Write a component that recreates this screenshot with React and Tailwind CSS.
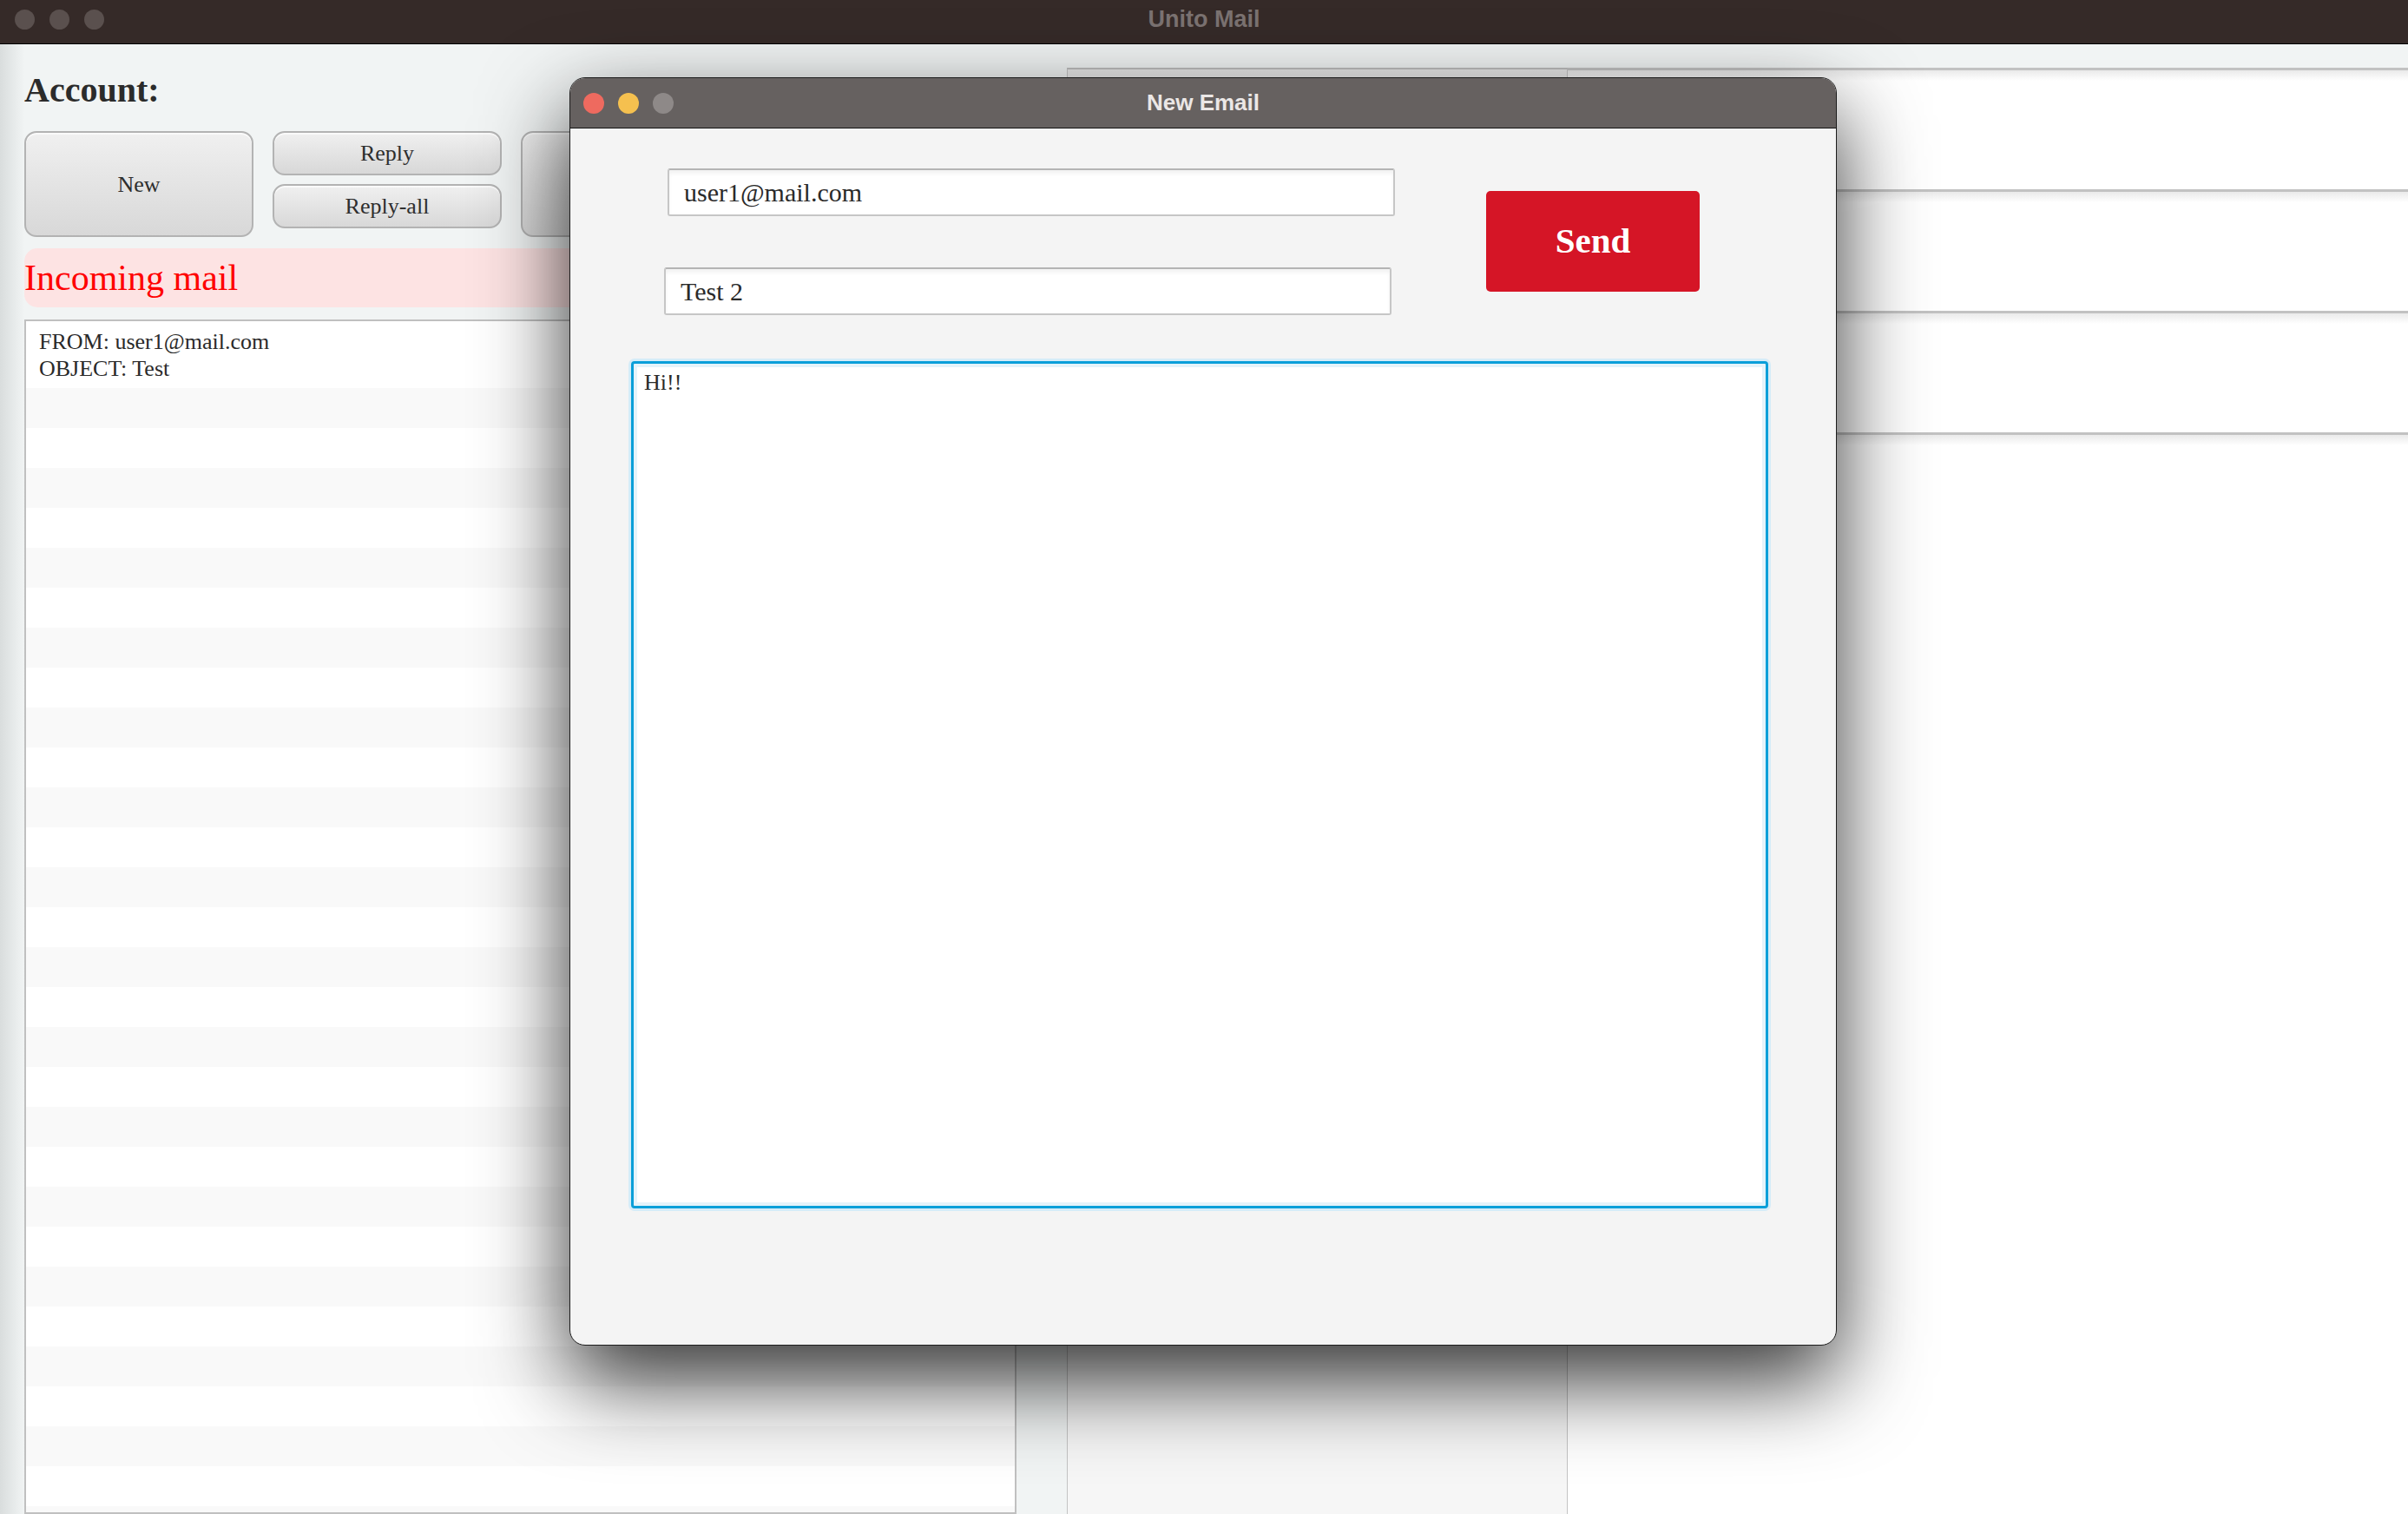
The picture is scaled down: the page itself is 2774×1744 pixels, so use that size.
import React from 'react';

const serif = "font-['Liberation_Serif',serif]";

const GrayButton = ({ label, className }) => (
  <button
    className={`flex items-center justify-center rounded-[14px] border-2 border-[#b3b3b3] bg-gradient-to-b from-[#f0f0f0] to-[#d8d8d8] text-[26px] text-[#2e2e2e] shadow-[inset_0_2px_0_#fafafa] ${serif} ${className}`}
  >
    {label}
  </button>
);

const MailList = () => {
  const rows = Array.from({ length: 30 }, (_, i) => i);
  return (
    <div className="flex-1 overflow-hidden border-2 border-[#c0c0c0] bg-white">
      <div className="pl-[15px] pt-[8px] pb-[7px] text-[26px] leading-[31px] text-[#2a2a2a]">
        <div>FROM: user1@mail.com</div>
        <div>OBJECT: Test</div>
      </div>
      {rows.map((i) => (
        <div
          key={i}
          className={i % 2 === 0 ? 'h-[46px] bg-[#f9f9f9]' : 'h-[46px] bg-white'}
        />
      ))}
    </div>
  );
};

const FieldRow = ({ last }) => (
  <div
    className={`border-t-[3px] border-[#c2c2c2] bg-[linear-gradient(to_bottom,#eaeaea,#ffffff_12px)] ${last ? 'flex-1' : 'h-[140px]'}`}
  />
);

const NewEmailDialog = () => (
  <div className="absolute left-[656px] top-[89px] flex h-[1461px] w-[1460px] flex-col overflow-hidden rounded-[18px] border-[1.5px] border-[#1c1c1c] bg-[#f4f4f4] shadow-[0_40px_100px_rgba(0,0,0,0.8)]">
    {/* title bar */}
    <div className="grid h-[58px] shrink-0 grid-cols-[1fr_auto_1fr] items-center border-b border-[#141414] bg-[#666160]">
      <div className="flex gap-[16px] pl-[15px]">
        <span className="block h-[24px] w-[24px] rounded-full bg-[#ee6a5f]" />
        <span className="block h-[24px] w-[24px] rounded-full bg-[#f5c04f]" />
        <span className="block h-[24px] w-[24px] rounded-full bg-[#8e8988]" />
      </div>
      <div className="font-['Liberation_Sans',sans-serif] text-[26px] font-bold leading-[29px] text-[#ebe7e6]">
        New Email
      </div>
      <div />
    </div>

    {/* body */}
    <div className={`flex flex-1 flex-col ${serif}`}>
      <div className="flex items-start">
        <div className="flex flex-col">
          <div className="ml-[112px] mt-[46px] flex h-[55px] w-[838px] items-center rounded-[3px] border-2 border-[#c6c6c6] border-t-[#b4b4b4] bg-white pl-[17px] text-[30px] text-[#2a2a2a] shadow-[inset_0_4px_4px_rgba(0,0,0,0.05)]">
            user1@mail.com
          </div>
          <div className="ml-[108px] mt-[59px] flex h-[55px] w-[838px] items-center rounded-[3px] border-2 border-[#c6c6c6] border-t-[#b4b4b4] bg-white pl-[17px] text-[30px] text-[#2a2a2a] shadow-[inset_0_4px_4px_rgba(0,0,0,0.05)]">
            Test 2
          </div>
        </div>
        <button className="ml-[105px] mt-[72px] flex h-[116px] w-[246px] items-center justify-center rounded-[5px] bg-[#d51526] text-[41px] font-bold text-white">
          Send
        </button>
      </div>

      <div className="ml-[70px] mt-[53px] h-[976px] w-[1310px] rounded-[4px] border-[3px] border-[#0a9fd9] bg-white px-[12px] pt-[7px] text-[26px] leading-[30px] text-[#2a2a2a] shadow-[0_0_0_3px_#d5ecf8,inset_0_0_0_4px_#e4f3fa]">
        Hi!!
      </div>
    </div>
  </div>
);

export default function App() {
  return (
    <div className="relative h-[1744px] w-[2774px] overflow-hidden bg-[#f1f4f4]">
      {/* main window title bar */}
      <div className="grid h-[51px] grid-cols-[1fr_auto_1fr] items-center border-b border-black bg-[#352a28] pb-[6px]">
        <div className="flex gap-[17px] pl-[17px]">
          <span className="block h-[23px] w-[23px] rounded-full bg-[#5a504e]" />
          <span className="block h-[23px] w-[23px] rounded-full bg-[#5a504e]" />
          <span className="block h-[23px] w-[23px] rounded-full bg-[#5a504e]" />
        </div>
        <div className="font-['Liberation_Sans',sans-serif] text-[27px] font-bold leading-[30px] text-[#7b7271]">
          Unito Mail
        </div>
        <div />
      </div>

      {/* main window body */}
      <div className={`flex h-[1693px] bg-[linear-gradient(to_right,#d9dddd,#f1f4f4_28px)] ${serif}`}>
        {/* left column */}
        <div className="ml-[28px] flex w-[1143px] flex-col">
          <div className="mt-[30px] text-[40px] font-bold leading-[46px] text-[#2b2b2b]">Account:</div>

          <div className="mt-[24px] flex items-start gap-[22px]">
            <GrayButton label="New" className="h-[122px] w-[264px]" />
            <div className="flex flex-col gap-[10px]">
              <GrayButton label="Reply" className="h-[51px] w-[264px]" />
              <GrayButton label="Reply-all" className="h-[51px] w-[264px]" />
            </div>
            <GrayButton label="Forward" className="h-[122px] w-[264px]" />
            <GrayButton label="Delete" className="h-[122px] w-[264px]" />
          </div>

          <div className="mt-[13px] flex h-[68px] items-center rounded-[15px] bg-[#fde3e3] text-[42px] leading-[46px] text-[#ff0000]">
            Incoming mail
          </div>

          <div className="mt-[14px] flex flex-1 flex-col overflow-hidden">
            <MailList />
          </div>
        </div>

        {/* middle panel */}
        <div className="ml-[58px] mt-[27px] w-[577px] border-x border-t-2 border-[#c4c4c4] border-t-[#bdbdbd] bg-[linear-gradient(to_bottom,#e8e8e8,#f6f6f6_40px)]" />

        {/* right panel */}
        <div className="mt-[27px] flex flex-1 flex-col bg-white">
          <FieldRow />
          <FieldRow />
          <FieldRow />
          <FieldRow last />
        </div>
      </div>

      <NewEmailDialog />
    </div>
  );
}
